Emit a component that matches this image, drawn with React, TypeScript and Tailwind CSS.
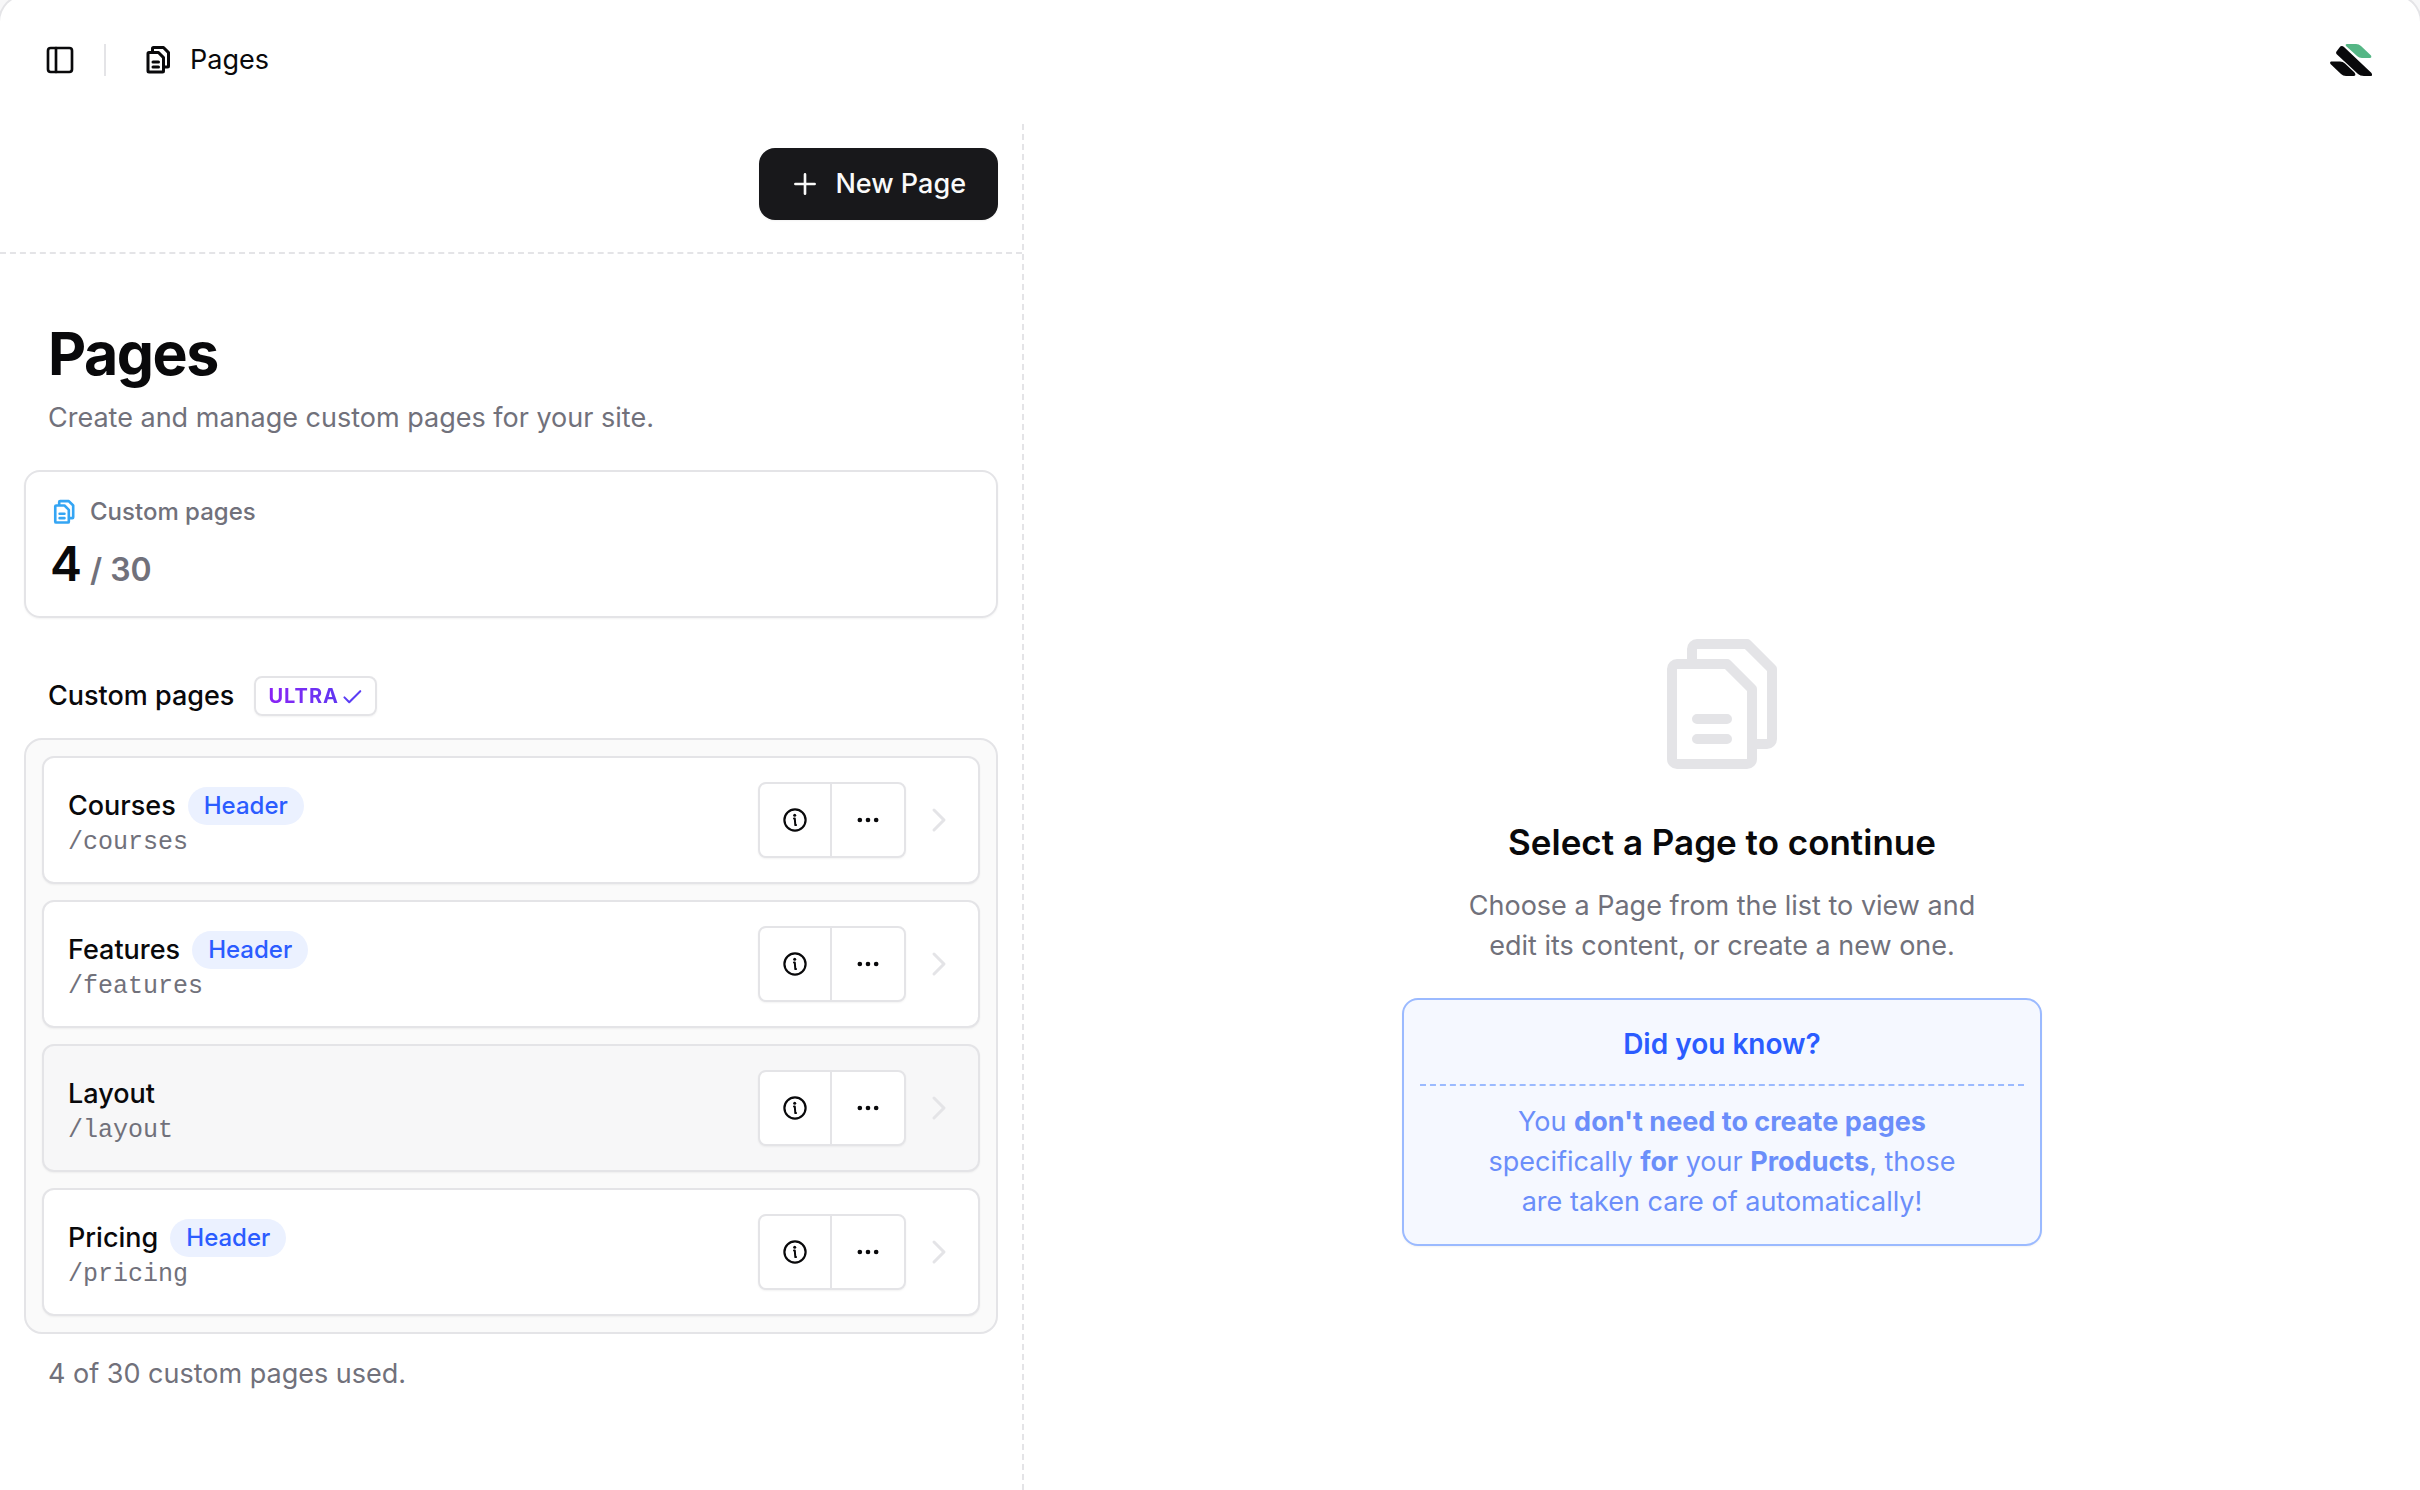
import { PanelLeft, Ellipsis } from "lucide-react";
import { PiFiles, PiFilesBold, PiPlusBold, PiCaretRightBold, PiCheckBold } from "react-icons/pi";

const pages = [
  { name: "Courses", path: "/courses", header: true, active: false },
  { name: "Features", path: "/features", header: true, active: false },
  { name: "Layout", path: "/layout", header: false, active: true },
  { name: "Pricing", path: "/pricing", header: true, active: false },
];

function Logo() {
  return (
    <svg viewBox="0 0 42 32" className="h-8 w-[42px]" aria-hidden="true">
      <path fill="#55b685" d="M17 0h9q3 0 5 2l10 9.500q1 2-1 2.500h-8q-3 0-5-2L16 2q-1-2 1-2z" />
      <path fill="#09090b" d="M6.500 7.500l3-4q2-2.500 4.500-.5L41.500 29q1.500 3-.5 3h-7q-4 0-6-2L7 10.500q-1.500-1.500-.5-3z" />
      <path fill="#09090b" d="M1 17.500h9q3 0 5 2l9.500 9q2 3-.5 3.500h-8q-3 0-5-2L.500 20q-1-2 .5-2.500z" />
    </svg>
  );
}

function InfoIcon() {
  return (
    <svg viewBox="0 0 28 28" className="size-7" fill="none" stroke="currentColor" strokeLinecap="round" strokeLinejoin="round" aria-hidden="true">
      <circle cx="14" cy="14" r="10.6" strokeWidth="2.2" />
      <path d="M13 12.600h.8l.5 6.500h.8" strokeWidth="2" />
      <circle cx="13.700" cy="9.200" r="1.500" fill="currentColor" stroke="none" />
    </svg>
  );
}

export default function App() {
  return (
    <div className="min-h-screen overflow-hidden bg-[#f7f7f8] font-['Inter',sans-serif] text-[27px] text-[#09090b]">
      <div className="-mx-0.5 -mt-1.5 flex min-h-[calc(100vh+6px)] flex-col rounded-t-[28px] border-2 border-b-0 border-[#e4e4e7] bg-white pt-1">
        <header className="flex h-[124px] items-center justify-between pr-12 pb-1 pl-11">
          <div className="flex items-center">
            <button type="button" aria-label="Toggle sidebar">
              <PanelLeft className="size-8" />
            </button>
            <div className="ml-7 h-8 w-0.5 bg-[#e4e4e7]" />
            <div className="ml-9 flex items-center gap-4">
              <PiFilesBold className="size-8" />
              <span>Pages</span>
            </div>
          </div>
          <a href="#home" aria-label="Home">
            <Logo />
          </a>
        </header>

        <div className="flex flex-1">
          <aside className="flex w-[1024px] shrink-0 flex-col border-r-2 border-dashed border-[#e4e4e7]">
            <div className="flex h-[130px] items-start justify-end border-b-2 border-dashed border-[#e4e4e7] px-6 pt-6">
              <button type="button" className="flex h-[72px] items-center gap-4 rounded-2xl bg-[#18181b] px-8 font-medium text-[#fafafa] shadow-xs">
                <PiPlusBold className="size-7" />
                New Page
              </button>
            </div>

            <div className="px-6 pt-16">
              <h1 className="px-6 text-[59px] leading-[72px] font-bold tracking-tight">Pages</h1>
              <p className="mt-2 px-6 leading-10 text-[#71717b]">Create and manage custom pages for your site.</p>

              <section className="mt-8 h-[148px] rounded-2xl border-2 border-[#e4e4e7] px-6 pt-[22px] shadow-xs">
                <h2 className="flex items-center gap-3 text-2xl leading-9 font-medium text-[#71717b]">
                  <PiFilesBold className="size-7 text-[#34a5f4]" />
                  Custom pages
                </h2>
                <p className="mt-1.5 flex items-baseline gap-2 text-5xl leading-[56px] font-semibold">
                  4 <span className="text-[32px] text-[#71717b]">/ 30</span>
                </p>
              </section>

              <div className="mt-[58px] flex items-center gap-5 pl-6">
                <h2 className="leading-10 font-medium">Custom pages</h2>
                <span className="flex h-10 items-center gap-0.5 rounded-lg border-2 border-[#e4e4e7] px-3 text-xl font-bold shadow-xs">
                  <span className="bg-linear-to-r from-[#8b22f5] to-[#5f35f2] bg-clip-text tracking-wider text-transparent">ULTRA</span>
                  <PiCheckBold className="size-[22px] text-[#5b3df5]" />
                </span>
              </div>

              <ul className="mt-[22px] flex flex-col gap-4 rounded-[18px] border-2 border-[#e4e4e7] bg-[#fafafa] p-4">
                {pages.map((page) => (
                  <li
                    key={page.name}
                    className={
                      "flex h-32 items-center rounded-xl border-2 border-[#e4e4e7] px-6 shadow-xs " +
                      (page.active ? "bg-[#f7f7f8]" : "bg-white")
                    }
                  >
                    <div className="flex-1 pt-1.5">
                      <div className="flex h-[38px] items-center gap-3">
                        <a href={"#" + page.path} className="font-medium">{page.name}</a>
                        {page.header && (
                          <span className="flex h-[38px] items-center rounded-full bg-[#ebf1ff] px-4 text-2xl font-medium text-[#2b5cff]">Header</span>
                        )}
                      </div>
                      <p className="mt-0.5 font-['Liberation_Mono',monospace] text-[25px] leading-8 text-[#71717b]">{page.path}</p>
                    </div>
                    <div className="flex h-[76px] overflow-hidden rounded-lg border-2 border-[#e4e4e7] bg-white shadow-xs">
                      <button type="button" aria-label={"About " + page.name} className="flex w-[72px] items-center justify-center border-r-2 border-[#e4e4e7]">
                        <InfoIcon />
                      </button>
                      <button type="button" aria-label={"More actions for " + page.name} className="flex w-[72px] items-center justify-center">
                        <Ellipsis className="size-7" />
                      </button>
                    </div>
                    <PiCaretRightBold className="ml-4 size-8 text-[#e4e4e7]" />
                  </li>
                ))}
              </ul>
              <p className="mt-5 px-6 leading-10 text-[#71717b]">4 of 30 custom pages used.</p>
            </div>
          </aside>

          <main className="flex flex-1 flex-col items-center justify-center pt-64 text-center">
            <PiFiles className="size-40 text-[#e4e4e7]" />
            <h2 className="mt-[34px] text-[35px] leading-[48px] font-semibold">Select a Page to continue</h2>
            <p className="mt-5 w-[560px] leading-10 text-[#71717b]">
              Choose a Page from the list to view and edit its content, or create a new one.
            </p>
            <section className="mt-8 w-[640px] rounded-2xl border-2 border-[#9bbaff] bg-[#f5f8ff] px-4 shadow-xs">
              <h3 className="border-b-2 border-dashed border-[#9bbaff] pt-[22px] pb-[18px] text-[28px] leading-[44px] font-semibold text-[#2b5cff]">Did you know?</h3>
              <p className="px-12 pt-4 pb-[22px] leading-10 text-[#6b8efa]">
                You <strong>don't need to create pages</strong> specifically <strong>for</strong> your <strong>Products</strong>, those are taken care of automatically!
              </p>
            </section>
          </main>
        </div>
      </div>
    </div>
  );
}
